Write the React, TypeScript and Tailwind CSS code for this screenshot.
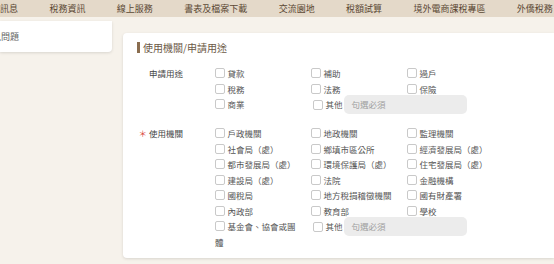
import React from 'react';

const navItems = ['最新訊息', '稅務資訊', '線上服務', '書表及檔案下載', '交流園地', '稅額試算', '境外電商課稅專區', '外僑稅務'];

const purposeItems = ['貸款', '補助', '過戶', '稅務', '法務', '保險', '商業'];

const agencyItems = [
    '戶政機關', '地政機關', '監理機關',
    '社會局（處）', '鄉填市區公所', '經濟發展局（處）',
    '都市發展局（處）', '環境保護局（處）', '住宅發展局（處）',
    '建設局（處）', '法院', '金融機構',
    '國稅局', '地方稅捐稽徵機關', '國有財產署',
    '內政部', '教育部', '學校',
    '基金會、協會或團體',
];

const Check: React.FC<{ label: string }> = ({ label }) => (
    <label className="block leading-[15.5px] text-[#555]">
        <span className="inline-block w-[10px] h-[10px] border border-[#c9c9c9] rounded-[2px] bg-white align-[-1px] mr-[2.5px]"></span>
        {label}
    </label>
);

const Other: React.FC = () => (
    <div className="col-span-2 flex items-center h-[15.5px] pl-[2px] text-[#555]">
        <span className="inline-block w-[10px] h-[10px] border border-[#c9c9c9] rounded-[2px] bg-white mr-[2.5px] shrink-0"></span>
        <span className="shrink-0">其他</span>
        <div className="ml-[1px] w-[123px] h-[19px] shrink-0 rounded-[5px] bg-[#ececec] flex items-center pl-[8px] text-[#a0a0a0]">
            句選必須
        </div>
    </div>
);

const FormRow: React.FC<{ label: React.ReactNode; children: React.ReactNode; className?: string }> = ({ label, children, className }) => (
    <div className={`flex ${className ?? ''}`}>
        <div className="w-[78px] shrink-0 pr-[32px] text-right leading-[15.5px] text-[#444]">{label}</div>
        <div className="grid grid-cols-[84px_84px_84px] gap-x-[12px] items-start">{children}</div>
    </div>
);

export default function App() {
    return (
        <div className="w-[554px] h-[264px] overflow-hidden bg-[#f6f2eb] font-['Noto_Sans_CJK_TC',sans-serif]">
            <nav className="h-[17px] bg-[#e4d9c9] flex items-center gap-[31.4px] ml-[-18px] whitespace-nowrap text-[9px] text-[#5b4834]">
                {navItems.map((n) => (
                    <span key={n}>{n}</span>
                ))}
            </nav>
            <div className="flex">
                <aside className="w-[112px] shrink-0 mt-[4px] h-[31px] bg-white rounded-br-[4px] shadow-[0_1px_3px_rgba(0,0,0,0.12)] flex items-center overflow-hidden">
                    <span className="ml-[-17px] whitespace-nowrap text-[9px] text-[#666]">常見問題</span>
                </aside>
                <main className="ml-[11px] mt-[16px] flex-1 h-[225px] bg-white rounded-l-[4px] shadow-[0_1px_3px_rgba(0,0,0,0.12)] pl-[14px] pt-[8px] text-[8.5px] whitespace-nowrap">
                    <div className="flex items-center h-[12px]">
                        <span className="w-[3px] h-[11px] bg-[#8a6d4f] mr-[3px]"></span>
                        <span className="text-[10px] text-[#6b5845]">使用機關/申請用途</span>
                    </div>
                    <FormRow label="申請用途" className="mt-[13px]">
                        {purposeItems.map((p) => (
                            <Check key={p} label={p} />
                        ))}
                        <Other />
                    </FormRow>
                    <FormRow
                        className="mt-[13.5px]"
                        label={
                            <>
                                <span className="text-[#d9433a]">＊</span> 使用機關
                            </>
                        }
                    >
                        {agencyItems.map((a) => (
                            <div key={a} className="whitespace-normal">
                                <Check label={a} />
                            </div>
                        ))}
                        <Other />
                    </FormRow>
                </main>
            </div>
        </div>
    );
}
